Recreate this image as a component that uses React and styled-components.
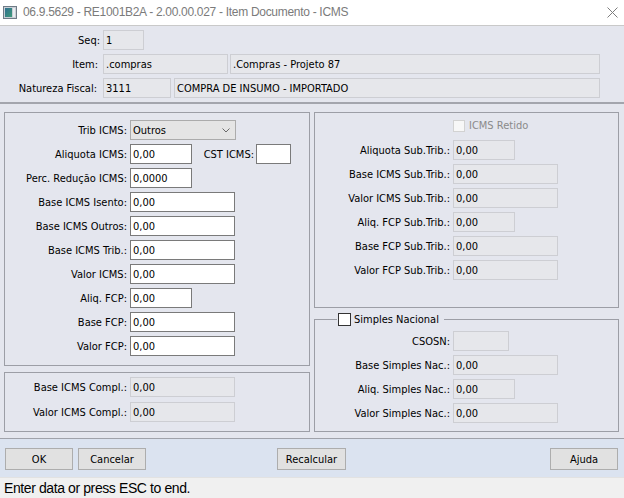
import React from 'react';
import styled, { createGlobalStyle } from 'styled-components';

const FORM_FONT = `"DejaVu Sans Condensed", "Liberation Sans", sans-serif`;

const Global = createGlobalStyle`
  html, body { margin: 0; padding: 0; }
  body { width: 624px; height: 498px; overflow: hidden; background: #e4e6ee; }
  * { box-sizing: border-box; }
`;

const Window = styled.div`
  width: 624px;
  height: 498px;
  display: flex;
  flex-direction: column;
  background: #e4e6ee;
  font-family: ${FORM_FONT};
  font-size: 11px;
  color: #000;
`;

const TitleBar = styled.div`
  height: 26px;
  flex: none;
  background: #fff;
  border-bottom: 1px solid #c9c9c9;
  display: flex;
  align-items: center;
  gap: 6px;
  padding: 0 6px 1px 3px;
  font-family: "Liberation Sans", sans-serif;
  font-size: 12px;
  letter-spacing: -0.3px;
  color: #7b7b7b;
`;

const TitleText = styled.span`
  flex: 1;
  white-space: nowrap;
`;

const Header = styled.div`
  height: 78px;
  flex: none;
  padding: 4px 24px 0 0;
  display: flex;
  flex-direction: column;
  gap: 4px;
  border-bottom: 2px solid #a3a5ad;
`;

const Row = styled.div`
  display: flex;
  align-items: center;
  height: 20px;
  gap: ${p => p.$gap ?? 0}px;
  flex: none;
`;

const Label = styled.div`
  flex: none;
  width: ${p => p.$w}px;
  padding-right: ${p => p.$pr ?? 3}px;
  text-align: right;
  white-space: nowrap;
  color: ${p => (p.$muted ? '#8a8a8a' : '#000')};
`;

const Field = styled.div`
  flex: ${p => (p.$grow ? 1 : 'none')};
  width: ${p => (p.$grow ? 'auto' : `${p.$w}px`)};
  height: 20px;
  border: 1px solid ${p => (p.$ro ? '#cdced3' : '#7a7a7a')};
  background: ${p => (p.$ro ? '#e6e7eb' : '#ffffff')};
  padding: 0 2px;
  display: flex;
  align-items: center;
  white-space: nowrap;
  overflow: hidden;
`;

const Select = styled.div`
  flex: none;
  width: ${p => p.$w}px;
  height: 20px;
  border: 1px solid #acacac;
  background: #e5e5e5;
  padding: 0 5px 0 2px;
  display: flex;
  align-items: center;
  justify-content: space-between;
`;

const Main = styled.div`
  height: 335px;
  flex: none;
  display: grid;
  grid-template-columns: 306px 305px;
  column-gap: 4px;
  padding: 8px 6px 6px 4px;
  border-bottom: 1px solid #a0a2aa;
`;

const Column = styled.div`
  display: flex;
  flex-direction: column;
  gap: ${p => p.$gap}px;
  min-height: 0;
`;

const Panel = styled.div`
  height: ${p => p.$h}px;
  flex: none;
  border: 1px solid #9c9ea6;
  padding-top: ${p => p.$pt}px;
  display: flex;
  flex-direction: column;
  gap: ${p => p.$gap ?? 4}px;
`;

const GroupBox = styled.fieldset`
  flex: 1;
  margin: 0;
  min-width: 0;
  padding: 5px 0 0 0;
  border: 1px solid #9c9ea6;
  display: flex;
  flex-direction: column;
  gap: 4px;
`;

const Legend = styled.legend`
  margin-left: 22px;
  padding: 0 5px 0 1px;
  height: 13px;
  display: flex;
  align-items: center;
  gap: 3px;
  line-height: 13px;
`;

const CheckBox = styled.span`
  display: inline-block;
  flex: none;
  width: ${p => p.$s}px;
  height: ${p => p.$s}px;
  border: 1px solid ${p => (p.$disabled ? '#d2d2d2' : '#333333')};
  background: ${p => (p.$disabled ? '#f7f7f7' : '#ffffff')};
`;

const CheckRow = styled.div`
  height: 16px;
  flex: none;
  display: flex;
  align-items: flex-start;
  gap: 4px;
  padding-left: 138px;
  line-height: 12px;
`;

const ButtonBar = styled.div`
  height: 38px;
  flex: none;
  background: #dbe3f0;
  display: flex;
  align-items: flex-start;
  gap: 5px;
  padding: 9px 6px 0 5px;
`;

const Button = styled.button`
  flex: none;
  width: ${p => p.$w}px;
  height: 22px;
  margin-left: ${p => p.$ml ?? '0'};
  padding: 0;
  background: #e1e1e1;
  border: 1px solid #adadad;
  font-family: ${FORM_FONT};
  font-size: 11px;
  color: #000;
`;

const StatusBar = styled.div`
  flex: 1;
  background: #f0f0f0;
  border-top: 1px solid #e2e2e2;
  padding: 0 4px;
  display: flex;
  align-items: center;
  font-family: "Liberation Sans", sans-serif;
  font-size: 14px;
  letter-spacing: -0.4px;
  color: #000;
`;

const WindowIcon = () => (
  <svg width="14" height="13" viewBox="0 0 14 13">
    <defs>
      <linearGradient id="wg" x1="0" y1="0" x2="1" y2="1">
        <stop offset="0" stopColor="#2f6f8f" />
        <stop offset="1" stopColor="#3f9a7a" />
      </linearGradient>
    </defs>
    <rect x="0.5" y="0.5" width="13" height="12" fill="#c9cfd6" stroke="#6f7b86" />
    <rect x="2" y="2" width="7" height="9" fill="url(#wg)" />
    <rect x="10" y="2" width="2" height="9" fill="#e8ecef" />
  </svg>
);

const CloseIcon = () => (
  <svg width="11" height="11" viewBox="0 0 11 11">
    <path d="M0.5 0.5 L10.5 10.5 M10.5 0.5 L0.5 10.5" stroke="#7d7d7d" strokeWidth="1" />
  </svg>
);

const Chevron = () => (
  <svg width="8" height="5" viewBox="0 0 8 5">
    <path d="M0.5 0.5 L4 4 L7.5 0.5" fill="none" stroke="#6a6a6a" strokeWidth="1" />
  </svg>
);

const N = 62;
const W = 105;

const leftRows = [
  { label: 'Base ICMS Isento:', w: W },
  { label: 'Base ICMS Outros:', w: W },
  { label: 'Base ICMS Trib.:', w: W },
  { label: 'Valor ICMS:', w: W },
  { label: 'Aliq. FCP:', w: N },
  { label: 'Base FCP:', w: W },
  { label: 'Valor FCP:', w: W },
];

const stRows = [
  { label: 'Aliquota Sub.Trib.:', w: N },
  { label: 'Base ICMS Sub.Trib.:', w: W },
  { label: 'Valor ICMS Sub.Trib.:', w: W },
  { label: 'Aliq. FCP Sub.Trib.:', w: N },
  { label: 'Base FCP Sub.Trib.:', w: W },
  { label: 'Valor FCP Sub.Trib.:', w: W },
];

const snRows = [
  { label: 'CSOSN:', w: 56, value: '' },
  { label: 'Base Simples Nac.:', w: W, value: '0,00' },
  { label: 'Aliq. Simples Nac.:', w: N, value: '0,00' },
  { label: 'Valor Simples Nac.:', w: W, value: '0,00' },
];

export default function App() {
  return (
    <>
      <Global />
      <Window>
        <TitleBar>
          <WindowIcon />
          <TitleText>06.9.5629 - RE1001B2A - 2.00.00.027 - Item Documento - ICMS</TitleText>
          <CloseIcon />
        </TitleBar>

        <Header>
          <Row>
            <Label $w={103}>Seq:</Label>
            <Field $ro $w={41}>1</Field>
          </Row>
          <Row $gap={2}>
            <Label $w={101}>Item:</Label>
            <Field $ro $w={125}>.compras</Field>
            <Field $ro $grow>.Compras - Projeto 87</Field>
          </Row>
          <Row $gap={3}>
            <Label $w={100}>Natureza Fiscal:</Label>
            <Field $ro $w={68}>3111</Field>
            <Field $ro $grow>COMPRA DE INSUMO - IMPORTADO</Field>
          </Row>
        </Header>

        <Main>
          <Column $gap={6}>
            <Panel $h={254} $pt={7}>
              <Row>
                <Label $w={125}>Trib ICMS:</Label>
                <Select $w={106}>
                  <span>Outros</span>
                  <Chevron />
                </Select>
              </Row>
              <Row>
                <Label $w={125}>Aliquota ICMS:</Label>
                <Field $w={N}>0,00</Field>
                <Label $w={64} $pr={2}>CST ICMS:</Label>
                <Field $w={35} />
              </Row>
              <Row>
                <Label $w={125}>Perc. Redução ICMS:</Label>
                <Field $w={N}>0,0000</Field>
              </Row>
              {leftRows.map(r => (
                <Row key={r.label}>
                  <Label $w={125}>{r.label}</Label>
                  <Field $w={r.w}>0,00</Field>
                </Row>
              ))}
            </Panel>
            <Panel $h={60} $pt={4} $gap={5}>
              <Row>
                <Label $w={125}>Base ICMS Compl.:</Label>
                <Field $ro $w={W}>0,00</Field>
              </Row>
              <Row>
                <Label $w={125}>Valor ICMS Compl.:</Label>
                <Field $ro $w={W}>0,00</Field>
              </Row>
            </Panel>
          </Column>

          <Column $gap={5}>
            <Panel $h={196} $pt={7}>
              <CheckRow>
                <CheckBox $s={12} $disabled />
                <Label $w={80} $muted style={{ textAlign: 'left' }}>ICMS Retido</Label>
              </CheckRow>
              {stRows.map(r => (
                <Row key={r.label}>
                  <Label $w={138}>{r.label}</Label>
                  <Field $ro $w={r.w}>0,00</Field>
                </Row>
              ))}
            </Panel>
            <GroupBox>
              <Legend>
                <CheckBox $s={13} />
                <span>Simples Nacional</span>
              </Legend>
              {snRows.map(r => (
                <Row key={r.label}>
                  <Label $w={138}>{r.label}</Label>
                  <Field $ro $w={r.w}>{r.value}</Field>
                </Row>
              ))}
            </GroupBox>
          </Column>
        </Main>

        <ButtonBar>
          <Button $w={68}>OK</Button>
          <Button $w={68}>Cancelar</Button>
          <Button $w={69} $ml="126px">Recalcular</Button>
          <Button $w={68} $ml="auto">Ajuda</Button>
        </ButtonBar>

        <StatusBar>Enter data or press ESC to end.</StatusBar>
      </Window>
    </>
  );
}
